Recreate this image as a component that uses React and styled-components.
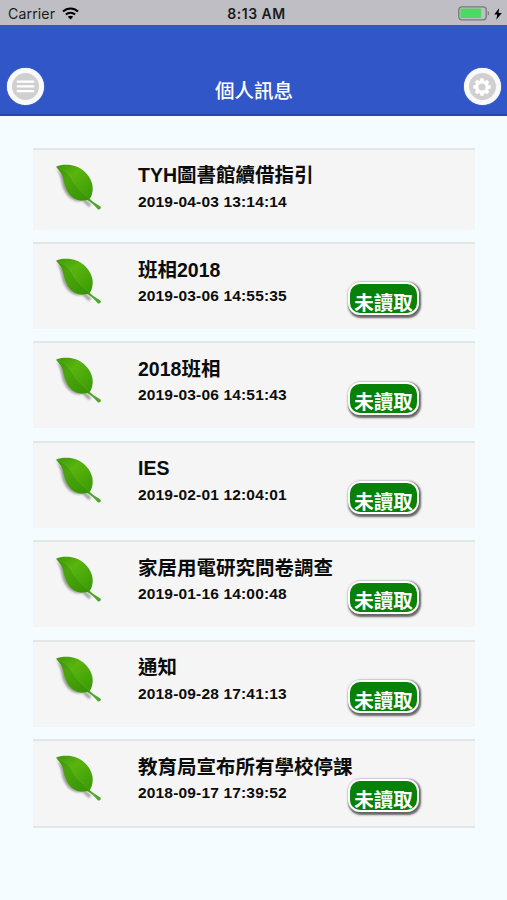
import React from "react";
import styled, { createGlobalStyle } from "styled-components";

const sans = `"Liberation Sans", "Noto Sans CJK TC", sans-serif`;

const GlobalStyle = createGlobalStyle`
  *, *::before, *::after { box-sizing: border-box; }
  body { margin: 0; background: #f5fcff; font-family: ${sans}; }
`;

const Screen = styled.div`
  width: 100%;
  max-width: 507px;
  height: 900px;
  overflow: hidden;
  background: #f5fcff;
`;

const StatusBar = styled.div`
  display: grid;
  grid-template-columns: 1fr auto 1fr;
  align-items: center;
  height: 25px;
  padding: 2px 5px 0 8px;
  background: #bfbec4;
  color: #1c1c20;
  font-family: Inter, sans-serif;
`;

const Carrier = styled.div`
  display: flex;
  align-items: center;
  gap: 7px;
  font-size: 14.2px;
  line-height: 20px;
  letter-spacing: 0.08px;
`;

const Clock = styled.div`
  font-size: 14px;
  line-height: 20px;
  font-weight: 600;
  letter-spacing: 0.5px;
  padding-left: 3px;
`;

const Power = styled.div`
  display: flex;
  align-items: center;
  justify-content: flex-end;
  gap: 4px;
  svg { display: block; }
`;

const NavBar = styled.header`
  display: flex;
  align-items: flex-end;
  justify-content: space-between;
  height: 91px;
  padding: 0 6px 9px 7px;
  background: #3156c8;
  border-bottom: 2px solid #2846a6;
`;

const NavTitle = styled.h1`
  margin: 0;
  color: #fff;
  font-size: 19.5px;
  line-height: 28px;
  font-weight: 500;
`;

const RoundButton = styled.button`
  display: grid;
  place-items: center;
  width: 37px;
  height: 37px;
  padding: 0;
  border: 5px solid #fafafa;
  border-radius: 50%;
  background: #d0d0d0;
  box-shadow: 0 0 1px #dfe4f5;
  svg { display: block; }
`;

const MessageList = styled.main`
  display: flex;
  flex-direction: column;
  gap: 12.4px;
  padding: 31.6px 32px 0 33px;
`;

const MessageRow = styled.article`
  display: grid;
  grid-template-columns: 105px 210px 1fr;
  grid-template-rows: 41px 1fr;
  height: ${(p) => (p.$last ? 89 : p.$unread ? 87 : 82)}px;
  background: #f5f5f5;
  border-top: 2px solid #e1e6e7;
  border-bottom: ${(p) => (p.$last ? "2px solid #e1e6e7" : "0")};
`;

const LeafCell = styled.div`
  grid-row: 1 / 3;
  padding: 13px 0 0 20px;
  svg { display: block; }
`;

const Title = styled.h2`
  grid-column: 2 / 4;
  margin: 0;
  padding-top: 11.6px;
  color: #0c0c0c;
  font-size: 19.5px;
  line-height: 28px;
  font-weight: 700;
  white-space: nowrap;
`;

const Timestamp = styled.time`
  color: #0c0c0c;
  font-size: 15.5px;
  line-height: 22px;
  font-weight: 700;
  letter-spacing: 0.17px;
  white-space: nowrap;
`;

const Badge = styled.span`
  display: flex;
  justify-content: center;
  width: 71px;
  height: 33px;
  margin-top: -2.6px;
  padding-top: 4.6px;
  border: 2.5px solid #fff;
  border-radius: 12px;
  background: #078107;
  box-shadow: 1px 1.5px 2px 1px #666;
  color: #fff;
  font-size: 19.5px;
  line-height: 28px;
  font-weight: 700;
  white-space: nowrap;
`;

const WifiIcon = () => (
  <svg width="17" height="13" viewBox="0 0 17 13" fill="none" stroke="#000" strokeWidth="2.1">
    <path d="M1 4.6C5.2.4 11.8.4 16 4.6" />
    <path d="M3.9 7.6c2.6-2.5 6.6-2.5 9.2 0" />
    <path d="M8.5 12.4 5.8 9.7c1.5-1.4 3.9-1.4 5.4 0z" fill="#000" stroke="none" />
  </svg>
);

const BatteryIcon = () => (
  <svg width="32" height="15" viewBox="0 0 32 15">
    <rect x=".8" y=".8" width="27.4" height="13" rx="3" fill="none" stroke="#77777b" strokeWidth="1.3" />
    <rect x="2.4" y="2.5" width="20.8" height="9.6" rx="1.2" fill="#4bd964" />
    <path d="M29.7 5c1.8.7 1.8 3.9 0 4.6z" fill="#77777b" />
  </svg>
);

const BoltIcon = () => (
  <svg width="8" height="12" viewBox="0 0 8 12">
    <path d="M5.1.2.2 6.6h3L2.4 11.8 7.8 5H4.6z" fill="#000" />
  </svg>
);

const MenuIcon = () => (
  <svg width="19" height="17" viewBox="0 0 19 17" stroke="#fff" strokeWidth="2.3" strokeLinecap="round">
    <path d="M1.7 3.7h15.6M1.7 8.4h15.6M1.7 13.1h15.6" />
  </svg>
);

const GearIcon = () => (
  <svg width="20" height="20" viewBox="-10 -10 20 20">
    <g fill="#fff">
      {[0, 45, 90, 135, 180, 225, 270, 315].map((angle) => (
        <path key={angle} d="M-2.4-5-1.5-8.7h3L2.4-5z" transform={`rotate(${angle})`} />
      ))}
    </g>
    <circle r="5.2" fill="none" stroke="#fff" strokeWidth="3.2" />
  </svg>
);

const LeafIcon = () => (
  <svg width="52" height="52" viewBox="0 0 52 52">
    <defs>
      <linearGradient id="blade" x1="0" y1="0" x2=".8" y2="1">
        <stop offset="0" stopColor="#3c9708" />
        <stop offset=".4" stopColor="#59b50e" />
        <stop offset="1" stopColor="#3c9c06" />
      </linearGradient>
      <filter id="soft" x="-20%" y="-20%" width="140%" height="140%">
        <feGaussianBlur stdDeviation=".9" />
      </filter>
    </defs>
    <g fill="#777" opacity=".7" filter="url(#soft)">
      <path d="M3 5.5C8 11 8 18 10 25 13.5 33 18.5 38 26 38.5l6-1L22 20z" />
      <path d="M29 37.5 36 44l2.2-2.5-6-5z" />
    </g>
    <path d="M35.5 34.5C38.5 38.5 42.5 40 47.4 43.4c1.4 1.4-.9 4-2.6 2.9C41 41.8 38 39.3 34 37z" fill="#50a62b" />
    <path
      d="M3 3.7C8 1.2 16 1.2 22 3 31 6 37.6 13.5 39.4 22 40.4 28 38.8 33 36.6 36.3 31.5 38.3 25.5 38 21 35.2 14 30.7 11.6 22.7 10 14.7 9 10 6.5 8 3 3.7z"
      fill="url(#blade)"
    />
    <path d="M4 4.2c8.5 3.3 12.7 7.5 16 13.8 3.5 7 9.6 11 16.6 18.3-5.1 2-11.1 1.7-15.6-1.1C14 30.7 11.6 22.7 10 14.7 9 10 6.5 8 4 4.2z" fill="#2f8504" opacity=".3" />
    <path d="M4 4.2c8.5 3.3 12.7 7.5 16 13.8 3.5 7 9.6 11 16.6 18" fill="none" stroke="#82c94a" strokeWidth=".6" opacity=".4" />
  </svg>
);

const messages = [
  { title: "TYH圖書館續借指引", time: "2019-04-03 13:14:14", unread: false },
  { title: "班相2018", time: "2019-03-06 14:55:35", unread: true },
  { title: "2018班相", time: "2019-03-06 14:51:43", unread: true },
  { title: "IES", time: "2019-02-01 12:04:01", unread: true },
  { title: "家居用電研究問卷調查", time: "2019-01-16 14:00:48", unread: true },
  { title: "通知", time: "2018-09-28 17:41:13", unread: true },
  { title: "教育局宣布所有學校停課", time: "2018-09-17 17:39:52", unread: true },
];

export default function App() {
  return (
    <Screen>
      <GlobalStyle />
      <StatusBar>
        <Carrier>Carrier <WifiIcon /></Carrier>
        <Clock>8:13 AM</Clock>
        <Power><BatteryIcon /><BoltIcon /></Power>
      </StatusBar>
      <NavBar>
        <RoundButton aria-label="選單"><MenuIcon /></RoundButton>
        <NavTitle>個人訊息</NavTitle>
        <RoundButton aria-label="設定"><GearIcon /></RoundButton>
      </NavBar>
      <MessageList>
        {messages.map((message, index) => (
          <MessageRow key={message.time} $unread={message.unread} $last={index === messages.length - 1}>
            <LeafCell><LeafIcon /></LeafCell>
            <Title>{message.title}</Title>
            <Timestamp>{message.time}</Timestamp>
            {message.unread && <Badge>未讀取</Badge>}
          </MessageRow>
        ))}
      </MessageList>
    </Screen>
  );
}
